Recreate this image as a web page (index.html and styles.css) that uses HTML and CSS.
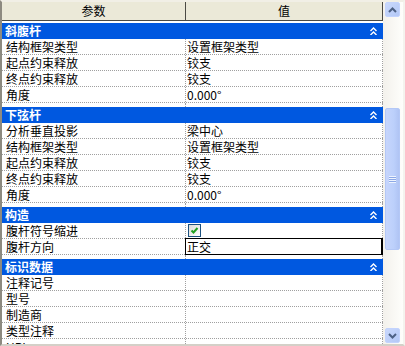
FILE: index.html
```html
<!DOCTYPE html>
<html>
<head>
<meta charset="utf-8">
<link rel="stylesheet" href="styles.css">
</head>
<body>
<div class="window">
  <div class="grid">
    <div class="head">
      <div class="hc hk">参数</div>
      <div class="hc hv">值</div>
    </div>
    <div class="top-gap"></div>

    <div class="group">
      <div class="cat"><span>斜腹杆</span><svg class="fold" width="7" height="8" viewBox="0 0 7 8"><path d="M0.5 4 L3.5 1 L6.5 4 M0.5 8 L3.5 5 L6.5 8" fill="none" stroke="#fff" stroke-width="1.4"/></svg></div>
      <div class="row"><div class="k">结构框架类型</div><div class="v">设置框架类型</div></div>
      <div class="row"><div class="k">起点约束释放</div><div class="v">铰支</div></div>
      <div class="row"><div class="k">终点约束释放</div><div class="v">铰支</div></div>
      <div class="row"><div class="k">角度</div><div class="v">0.000°</div></div>
      <div class="gap"><div class="k"></div><div class="v"></div></div>
    </div>

    <div class="group">
      <div class="cat"><span>下弦杆</span><svg class="fold" width="7" height="8" viewBox="0 0 7 8"><path d="M0.5 4 L3.5 1 L6.5 4 M0.5 8 L3.5 5 L6.5 8" fill="none" stroke="#fff" stroke-width="1.4"/></svg></div>
      <div class="row"><div class="k">分析垂直投影</div><div class="v">梁中心</div></div>
      <div class="row"><div class="k">结构框架类型</div><div class="v">设置框架类型</div></div>
      <div class="row"><div class="k">起点约束释放</div><div class="v">铰支</div></div>
      <div class="row"><div class="k">终点约束释放</div><div class="v">铰支</div></div>
      <div class="row"><div class="k">角度</div><div class="v">0.000°</div></div>
      <div class="gap"><div class="k"></div><div class="v"></div></div>
    </div>

    <div class="group">
      <div class="cat"><span>构造</span><svg class="fold" width="7" height="8" viewBox="0 0 7 8"><path d="M0.5 4 L3.5 1 L6.5 4 M0.5 8 L3.5 5 L6.5 8" fill="none" stroke="#fff" stroke-width="1.4"/></svg></div>
      <div class="row"><div class="k">腹杆符号缩进</div><div class="v"><span class="check"><svg width="11" height="11" viewBox="0 0 11 11"><path d="M2.5 5.5 L4.5 7.5 L8.5 3" fill="none" stroke="#21a121" stroke-width="2"/></svg></span></div></div>
      <div class="row"><div class="k">腹杆方向</div><div class="v edit">正交</div></div>
      <div class="gap"><div class="k"></div><div class="v"></div></div>
    </div>

    <div class="group">
      <div class="cat"><span>标识数据</span><svg class="fold" width="7" height="8" viewBox="0 0 7 8"><path d="M0.5 4 L3.5 1 L6.5 4 M0.5 8 L3.5 5 L6.5 8" fill="none" stroke="#fff" stroke-width="1.4"/></svg></div>
      <div class="row"><div class="k">注释记号</div><div class="v"></div></div>
      <div class="row"><div class="k">型号</div><div class="v"></div></div>
      <div class="row"><div class="k">制造商</div><div class="v"></div></div>
      <div class="row"><div class="k">类型注释</div><div class="v"></div></div>
      <div class="row"><div class="k">URL</div><div class="v"></div></div>
    </div>
  </div>

  <div class="sb">
    <div class="btn"><svg width="9" height="6" viewBox="0 0 9 6"><path d="M1 5 L4.5 1.5 L8 5" fill="none" stroke="#4d6185" stroke-width="2"/></svg></div>
    <div class="thumb"><span class="grip"></span></div>
    <div class="track"></div>
    <div class="btn down"><svg width="9" height="6" viewBox="0 0 9 6"><path d="M1 1 L4.5 4.5 L8 1" fill="none" stroke="#4d6185" stroke-width="2"/></svg></div>
  </div>
</div>
</body>
</html>
```

FILE: styles.css
```css
* { box-sizing: border-box; }
html, body { margin: 0; padding: 0; }
body {
  font-family: "Noto Sans CJK SC", "Noto Sans", sans-serif;
  font-size: 12px;
  color: #000;
  background: #ece9d8;
}
.window {
  width: 405px;
  height: 346px;
  display: flex;
  border-top: 2px solid #f1efe6;
  border-left: 2px solid #8d8a80;
  border-right: 2px solid #f4f3ee;
  border-bottom: 2px solid #d4d0c8;
  background: #fff;
  overflow: hidden;
}
.grid {
  width: 381px;
  flex: none;
  background: #fff;
  overflow: hidden;
}
.head {
  display: grid;
  grid-template-columns: 184px 197px;
  height: 19px;
  background: #ebe9d8;
  border-bottom: 1px solid #4b4a44;
}
.hc {
  text-align: center;
  line-height: 18px;
  border-right: 1px solid #4b4a44;
}
.top-gap { height: 2px; }
.cat {
  height: 16px;
  background: #0058e0;
  color: #fff;
  font-weight: bold;
  display: flex;
  align-items: center;
  justify-content: space-between;
  padding: 0 6px 0 3px;
  line-height: 16px;
}
.fold { display: block; }
.row, .gap {
  display: grid;
  grid-template-columns: 184px 197px;
}
.row {
  height: 16px;
  border-bottom: 1px dotted #a0a0a0;
}
.gap { height: 4px; }
.k {
  padding-left: 4px;
  line-height: 15px;
  border-right: 1px dotted #a0a0a0;
  white-space: nowrap;
  overflow: hidden;
}
.v {
  padding-left: 1px;
  line-height: 15px;
  border-right: 1px dotted #a0a0a0;
  white-space: nowrap;
  overflow: hidden;
}
.edit {
  border: 1px solid #000;
  border-right-width: 2px;
  margin-left: -1px;
  height: 17px;
  margin-top: -1px;
  line-height: 15px;
  padding-left: 1px;
  position: relative;
  background: #fff;
}
.check {
  display: inline-flex;
  align-items: center;
  justify-content: center;
  width: 13px;
  height: 13px;
  margin: 1px 0 0 1px;
  border: 1px solid #1c5180;
  background: linear-gradient(135deg, #dcdcd7, #fff);
  vertical-align: top;
}
.check svg { display: block; }
.sb {
  width: 20px;
  flex: none;
  display: flex;
  flex-direction: column;
  background: linear-gradient(to right, #f3f1ec, #fefefb);
  padding: 0 3px 1px 2px;
}
.btn {
  height: 15px;
  flex: none;
  border: 1px solid #c3d3fd;
  border-radius: 2px;
  background: linear-gradient(135deg, #c9d8fc, #b3c8f6);
  display: flex;
  align-items: center;
  justify-content: center;
}
.thumb {
  margin-top: 91px;
  height: 142px;
  flex: none;
  border: 1px solid #b4c8f6;
  border-radius: 2px;
  background: linear-gradient(to right, #c6d5fc, #bcd0fb 60%, #b0c4f4);
  display: flex;
  align-items: center;
  justify-content: center;
}
.grip {
  width: 7px;
  height: 7px;
  background: repeating-linear-gradient(to bottom, #eef4fe 0 1px, #8ca8e6 1px 2px);
}
.track { flex: 1; }
```
